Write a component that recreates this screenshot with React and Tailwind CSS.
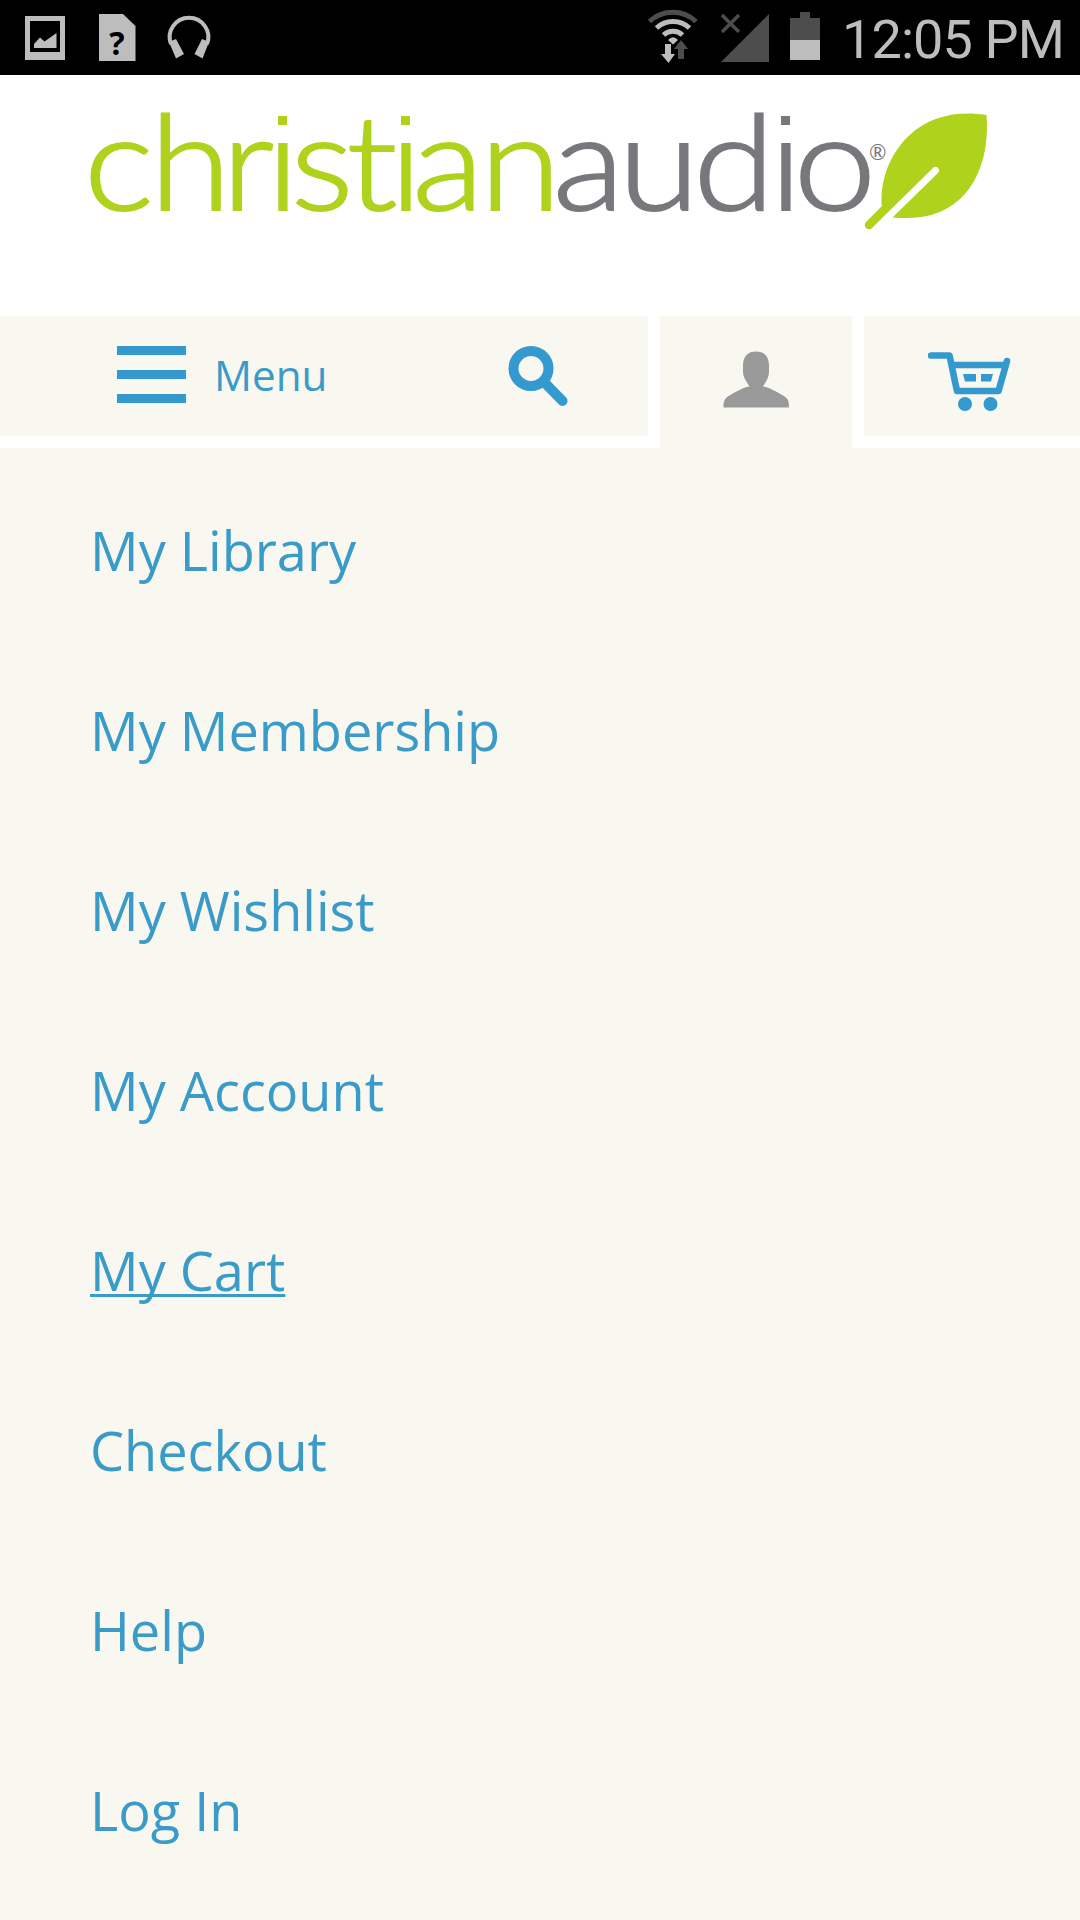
import React from 'react';

const links = [
  { label: 'My Library' },
  { label: 'My Membership' },
  { label: 'My Wishlist' },
  { label: 'My Account' },
  { label: 'My Cart', active: true },
  { label: 'Checkout' },
  { label: 'Help' },
  { label: 'Log In' },
];

const StatusBar = () => (
  <div className="flex h-[75px] items-start justify-between bg-black">
    <svg className="h-[75px] w-[240px]" viewBox="0 0 240 75" fill="#bdbdbd">
      <path fillRule="evenodd" d="M25 16h40v44H25zM30 21v31h30V21z" />
      <path d="M34 44l6-6.500 4.500 4 12-8.500v15H34z" />
      <path d="M99 14h24l12.500 12v35H99z" />
      <text x="117" y="54.500" textAnchor="middle" fill="#000" className="font-['Noto_Sans'] text-[32px] font-bold">?</text>
      <path d="M171 44a19.300 19.300 0 1 1 36 0" fill="none" stroke="#bdbdbd" strokeWidth="4" />
      <path d="M169 42l7-3 8 15-8 4.500zM209 42l-7-3-7.500 15 8 4.500z" />
    </svg>
    <div className="flex">
      <svg className="h-[75px] w-[210px]" viewBox="630 0 210 75" fill="#bdbdbd">
        <g fill="none" strokeWidth="5">
          <path d="M649.500 21.500a34 34 0 0 1 46.500 0" stroke="#4d4d4d" />
          <path d="M656.500 28a24 24 0 0 1 33 0" stroke="#bdbdbd" />
          <path d="M663.500 35a14 14 0 0 1 19 0" stroke="#bdbdbd" />
        </g>
        <path d="M668 40q5-5.500 10 0l-5 4.500z" />
        <path d="M665 44h6v10h4l-6.500 9-7.500-9h4z" />
        <path d="M678 59h6V49h4l-7-9-7 9h4z" fill="#4d4d4d" />
        <path d="M769 14v48h-48z" fill="#4d4d4d" />
        <path d="M722 15l17 17M739 15l-17 17" stroke="#4d4d4d" strokeWidth="3.500" />
        <path d="M800 12h10v6h10v22h-30V18h10z" fill="#4d4d4d" />
        <path d="M790 40h30v20h-30z" />
      </svg>
      <span className="w-[240px] whitespace-nowrap pl-[2px] pt-[8px] font-['Roboto',sans-serif] text-[54px] leading-[64px] tracking-[-0.9px] text-[#bdbdbd]">12:05 PM</span>
    </div>
  </div>
);

const Logo = () => (
  <svg className="h-[241px] w-[1080px]" viewBox="0 75 1080 241">
    <g transform="scale(1.11 1)" strokeWidth="2" className="font-['Lato',sans-serif] text-[133px] font-light">
      <text y="210.500" x="75.800 134.800 199.800 240.100 262 312.300 350.900 371.300 432.300" fill="#afd21c" stroke="#afd21c">christian</text>
      <text y="210.500" x="498 557 624.600 693.300 715.200" fill="#78777c" stroke="#78777c">audio</text>
    </g>
    {/* square dots over the i's */}
    <g stroke="#fff" strokeWidth="12" className="[paint-order:stroke]">
      <path d="M278 116h9v9h-9zM401 116h9v9h-9z" fill="#afd21c" />
      <path d="M781 116h9v9h-9z" fill="#78777c" />
    </g>
    <text x="869" y="160" fill="#78777c" className="font-['Lato',sans-serif] text-[21px]">®</text>
    <path d="M986.500 115C991 174 962 218 908 218Q899 218 892.500 217.500L938 173a3.500 3.500 0 0 0-5-5L872 228a4 4 0 0 1-6-6L882 206C878 164 911 103 986.500 115z" fill="#afd21c" />
  </svg>
);

const NavBar = () => (
  <nav className="flex h-[132px] gap-3">
    <div className="flex h-[120px] w-[648px] bg-[#f8f7f0]">
      <div className="flex w-[508px] pl-[117px] pt-[30px]">
        <div className="flex h-[57px] w-[69px] flex-col justify-between">
          <span className="h-[9px] bg-[#3399cf]" />
          <span className="h-[9px] bg-[#3399cf]" />
          <span className="h-[9px] bg-[#3399cf]" />
        </div>
        <span className="ml-[28px] text-[42.200px] leading-[58px] text-[#3a9bc9]">Menu</span>
      </div>
      <svg className="mt-[30px] h-[62px] w-[62px]" viewBox="508 346 62 62" fill="none" stroke="#3399cf">
        <circle cx="531" cy="368.500" r="17.500" strokeWidth="10" />
        <path d="M546 384l16.500 17" strokeWidth="10" strokeLinecap="round" />
      </svg>
    </div>
    <div className="h-[132px] w-[192px] bg-[#f8f7f0]">
      <svg className="ml-[63px] mt-[35px] h-[57px] w-[67px]" viewBox="723 351 67 57" fill="#999">
        <path d="M743 366c0-10 5-14.500 13-14.500s13 4.500 13 14.500v6c0 5-3 10-6 14.500 7 1 13 5 20 9 5 3 6 5 6 12H723.500c0-7 1-9 6-12 7-4 13-8 20-9-3-4.500-6.500-9.500-6.500-14.500z" />
      </svg>
    </div>
    <div className="h-[120px] w-[216px] bg-[#f8f7f0]">
      <svg className="ml-[64px] mt-[34px] h-[62px] w-[84px]" viewBox="928 350 84 62" fill="#3399cf">
        <path d="M931 355.500h18.500l7.500 35.500h41.500l8.500-30M954 365h52" fill="none" stroke="#3399cf" strokeWidth="6.600" strokeLinecap="round" strokeLinejoin="round" />
        <path d="M963 374h13v7.500h-11zM981 374h12l-2 7.500h-10z" />
        <circle cx="965" cy="404" r="7" />
        <circle cx="990.500" cy="404" r="7" />
      </svg>
    </div>
  </nav>
);

const App = () => {
  return (
    <div className="h-[1920px] w-[1080px] overflow-hidden bg-white font-['Open_Sans',sans-serif]">
      <StatusBar />
      <Logo />
      <NavBar />
      <ul className="h-[1472px] bg-[#f8f7f0] pl-[90px] pt-[12px]">
        {links.map((link) => (
          <li key={link.label} className="flex h-[180px] items-center text-[54.080px] leading-[74px] text-[#3a9bc9]">
            <a className={link.active ? 'underline decoration-[3px] underline-offset-[3px] [text-decoration-skip-ink:none]' : ''}>{link.label}</a>
          </li>
        ))}
      </ul>
    </div>
  );
};

export default App;
